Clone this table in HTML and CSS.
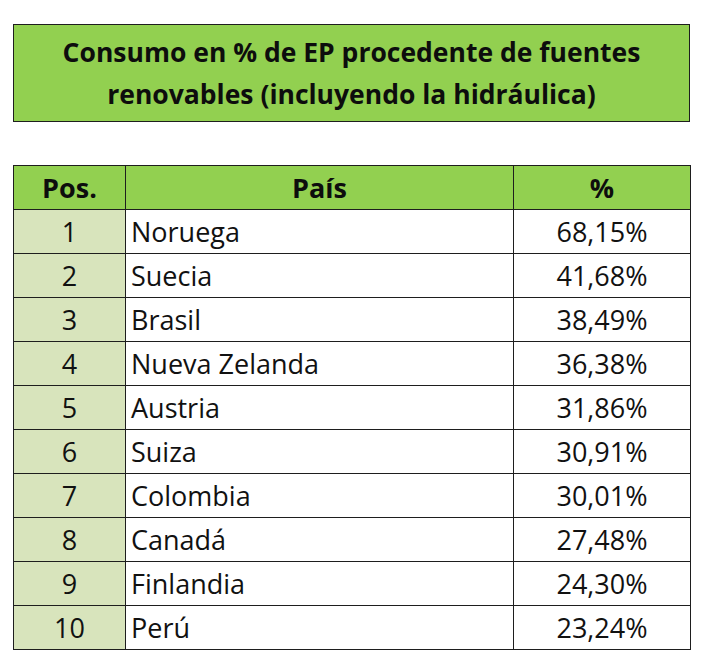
FILE: index.html
```html
<!DOCTYPE html>
<html lang="es">
<head>
<meta charset="utf-8">
<title>Consumo renovables</title>
<link rel="stylesheet" href="styles.css">
</head>
<body>
<div class="page">
  <div class="title">Consumo en % de EP procedente de fuentes<br>renovables (incluyendo la hidráulica)</div>
  <table class="ranking">
    <thead>
      <tr><th class="c-pos">Pos.</th><th class="c-pais">País</th><th class="c-pct">%</th></tr>
    </thead>
    <tbody>
      <tr><td class="pos">1</td><td class="pais">Noruega</td><td class="pct">68,15%</td></tr>
      <tr><td class="pos">2</td><td class="pais">Suecia</td><td class="pct">41,68%</td></tr>
      <tr><td class="pos">3</td><td class="pais">Brasil</td><td class="pct">38,49%</td></tr>
      <tr><td class="pos">4</td><td class="pais">Nueva Zelanda</td><td class="pct">36,38%</td></tr>
      <tr><td class="pos">5</td><td class="pais">Austria</td><td class="pct">31,86%</td></tr>
      <tr><td class="pos">6</td><td class="pais">Suiza</td><td class="pct">30,91%</td></tr>
      <tr><td class="pos">7</td><td class="pais">Colombia</td><td class="pct">30,01%</td></tr>
      <tr><td class="pos">8</td><td class="pais">Canadá</td><td class="pct">27,48%</td></tr>
      <tr><td class="pos">9</td><td class="pais">Finlandia</td><td class="pct">24,30%</td></tr>
      <tr><td class="pos">10</td><td class="pais">Perú</td><td class="pct">23,24%</td></tr>
    </tbody>
  </table>
</div>
</body>
</html>
```

FILE: styles.css
```css
html, body {
  margin: 0;
  padding: 0;
  background: #ffffff;
}
body {
  font-family: "Open Sans", "Liberation Sans", sans-serif;
  color: #111111;
}
.page {
  padding: 24px 0 0 13px;
}
.title {
  box-sizing: border-box;
  width: 677px;
  height: 98px;
  background: #92d050;
  border: 1px solid #1e1e1e;
  padding: 6px 0 5px;
  font-weight: 700;
  font-size: 26.5px;
  line-height: 42px;
  text-align: center;
  color: #0d0d0d;
}
.ranking {
  margin-top: 43px;
  border-collapse: collapse;
  table-layout: fixed;
  width: 676px;
}
.ranking th,
.ranking td {
  border: 1px solid #1e1e1e;
  height: 43px;
  padding: 0;
  vertical-align: middle;
  font-size: 27px;
  line-height: 30px;
}
.ranking th {
  background: #92d050;
  font-weight: 700;
  font-size: 27px;
  text-align: center;
  color: #0d0d0d;
}
.c-pos { width: 111px; }
.c-pais { width: 387px; }
.c-pct { width: 176px; }
.pos {
  background: #d8e4bc;
  text-align: center;
}
.ranking .pais {
  text-align: left;
  padding-left: 5px;
}
.pct {
  text-align: center;
}
```
